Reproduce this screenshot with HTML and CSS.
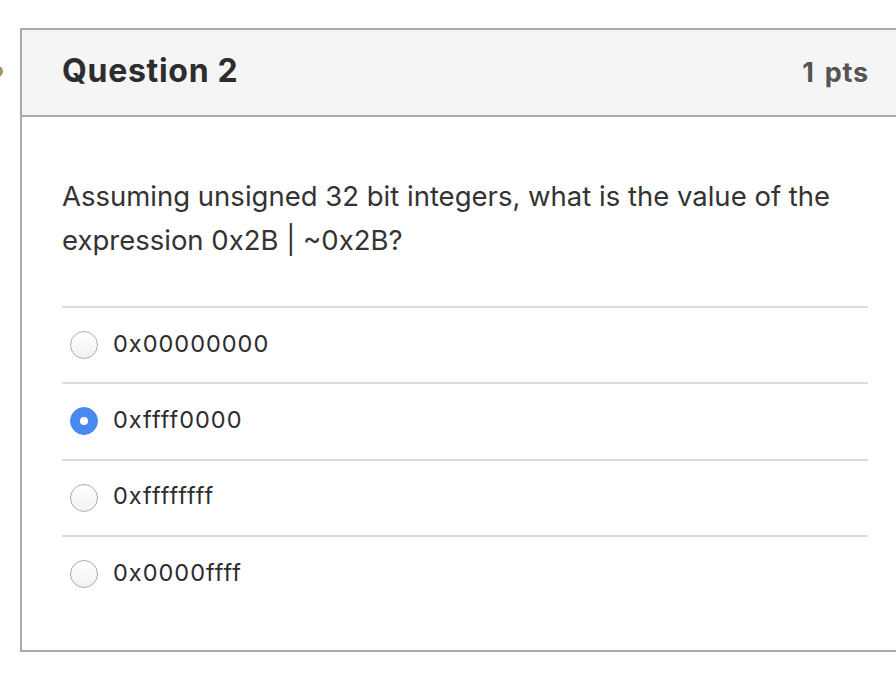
FILE: index.html
```html
<!DOCTYPE html>
<html>
<head>
<meta charset="utf-8">
<link rel="stylesheet" href="styles.css">
</head>
<body>
<div class="page">
  <span class="marker"></span>
  <div class="card">
    <div class="header">
      <h2 class="title">Question 2</h2>
      <span class="pts">1 pts</span>
    </div>
    <div class="content">
      <p class="question">Assuming unsigned 32 bit integers, what is the value of the expression 0x2B | ~0x2B?</p>
      <div class="answers">
        <label class="answer"><span class="radio"></span><span class="label">0x00000000</span></label>
        <label class="answer"><span class="radio checked"></span><span class="label">0xffff0000</span></label>
        <label class="answer"><span class="radio"></span><span class="label">0xffffffff</span></label>
        <label class="answer"><span class="radio"></span><span class="label">0x0000ffff</span></label>
      </div>
    </div>
  </div>
</div>
</body>
</html>
```

FILE: styles.css
```css
html, body {
  margin: 0;
  padding: 0;
  background: #fff;
  overflow: hidden;
}
body {
  font-family: Inter, "Noto Sans", sans-serif;
  color: #2d2d2d;
}
.page {
  position: relative;
  padding: 28px 0 0 20px;
  width: 1000px;
}
.marker {
  position: absolute;
  left: -8px;
  top: 66px;
  width: 11px;
  height: 11px;
  border-radius: 50%;
  background: #a8935f;
}
.card {
  border: 2px solid #aaaaaa;
  width: 874px;
}
.header {
  display: flex;
  align-items: center;
  justify-content: space-between;
  height: 85px;
  background: #f5f5f5;
  border-bottom: 2px solid #aaaaaa;
  padding: 0 27px 0 40px;
}
.title {
  margin: 0 0 5px;
  font-size: 32px;
  font-weight: 700;
  letter-spacing: 0.7px;
  color: #2d2d2d;
}
.pts {
  font-size: 27px;
  font-weight: 700;
  letter-spacing: 0.8px;
  word-spacing: 3px;
  color: #555;
}
.content {
  padding: 57px 28px 39px 40px;
}
.question {
  margin: 0 0 44px;
  font-size: 27.5px;
  line-height: 44px;
  color: #333;
}
.answers {
  display: flex;
  flex-direction: column;
}
.answer {
  display: flex;
  align-items: center;
  gap: 15px;
  height: 74.3px;
  padding-left: 8px;
  border-top: 2px solid #dcdcdc;
  font-size: 23.5px;
  letter-spacing: 1px;
  color: #2d2d2d;
}
.label {
  position: relative;
  top: -2px;
}
.radio {
  width: 26px;
  height: 26px;
  border-radius: 50%;
  border: 1px solid #adadad;
  background: linear-gradient(#fff, #f2f2f2);
  flex: none;
}
.radio.checked {
  position: relative;
  border-color: #4a8af0;
  background: #4a8af0;
}
.radio.checked::after {
  content: "";
  position: absolute;
  left: 9px;
  top: 9px;
  width: 8px;
  height: 8px;
  border-radius: 50%;
  background: #fff;
}
```
